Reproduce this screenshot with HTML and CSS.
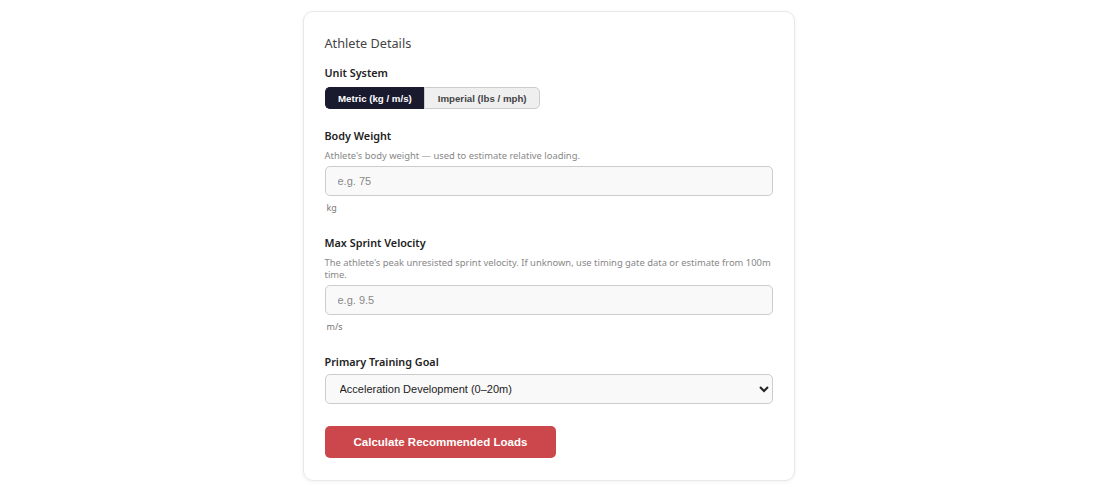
FILE: index.html
```html
<!DOCTYPE html>
<html lang="en">
<head>
<meta charset="utf-8">
<title>Athlete Details</title>
<link rel="stylesheet" href="styles.css">
</head>
<body>
<main class="card">
  <h2 class="card-title">Athlete Details</h2>

  <div class="field">
    <label class="label">Unit System</label>
    <div class="toggle">
      <button class="seg seg-active" type="button">Metric (kg / m/s)</button>
      <button class="seg" type="button">Imperial (lbs / mph)</button>
    </div>
  </div>

  <div class="field">
    <label class="label" for="bw">Body Weight</label>
    <p class="hint">Athlete's body weight — used to estimate relative loading.</p>
    <input id="bw" class="input" type="text" placeholder="e.g. 75">
    <span class="unit">kg</span>
  </div>

  <div class="field">
    <label class="label" for="vel">Max Sprint Velocity</label>
    <p class="hint">The athlete's peak unresisted sprint velocity. If unknown, use timing gate data or estimate from 100m time.</p>
    <input id="vel" class="input" type="text" placeholder="e.g. 9.5">
    <span class="unit">m/s</span>
  </div>

  <div class="field">
    <label class="label" for="goal">Primary Training Goal</label>
    <select id="goal" class="select">
      <option>Acceleration Development (0–20m)</option>
    </select>
  </div>

  <button class="submit" type="button">Calculate Recommended Loads</button>
</main>
</body>
</html>
```

FILE: styles.css
```css
* { box-sizing: border-box; }
html, body { margin: 0; padding: 0; background: #fff; }
body {
  font-family: "Noto Sans", "Open Sans", sans-serif;
  color: #222;
  padding: 11px 3px 14px 0;
}
.card {
  width: 492px;
  margin: 0 auto;
  background: #fff;
  border: 1px solid #e8e8e8;
  border-radius: 10px;
  box-shadow: 0 1px 4px rgba(0,0,0,0.06);
  padding: 21px 21px 22px 21px;
  display: flex;
  flex-direction: column;
}
.card-title {
  margin: 0 0 12px;
  font-size: 12.7px;
  font-weight: 400;
  color: #444;
  line-height: 20px;
}
.field { display: flex; flex-direction: column; margin-bottom: 19px; }
.label {
  font-size: 10.8px;
  font-weight: 600;
  color: #222;
  line-height: 16px;
  margin-bottom: 6px;
}
.hint {
  margin: -0.5px 0 4.5px;
  font-size: 9.4px;
  line-height: 12px;
  color: #888;
}
.toggle { display: flex; }
.seg {
  font-family: "Liberation Sans", Arial, sans-serif;
  font-size: 9.7px;
  font-weight: 700;
  height: 22px;
  padding: 0 12px;
  white-space: nowrap;
  border: 1px solid #ccc;
  background: #efefef;
  color: #444;
  cursor: pointer;
}
.seg:first-child { border-radius: 5px 0 0 5px; border-right: none; padding: 0 12.5px; }
.seg:last-child { border-radius: 0 5px 5px 0; padding: 0 12.5px; }
.seg-active { background: #1a1a2e; border-color: #1a1a2e; color: #fff; }
.input, .select {
  width: 100%;
  height: 30px;
  border: 1px solid #ccc;
  border-radius: 5px;
  background: #f9f9f9;
  font-family: "Liberation Sans", Arial, sans-serif;
  font-size: 11px;
  padding: 0 12px;
  color: #222;
}
.input::placeholder { color: #888; }
.unit {
  font-size: 9px;
  color: #777;
  margin: 6px 0 2px 2px;
  line-height: 12px;
}
.select { padding: 0 8px 0 10px; margin-top: -2px; }
.submit {
  align-self: flex-start;
  margin-top: 3px;
  height: 32px;
  padding: 0 29px;
  border: none;
  border-radius: 5px;
  background: #cc474b;
  color: #fff;
  font-family: "Liberation Sans", Arial, sans-serif;
  font-size: 11.5px;
  font-weight: 700;
  cursor: pointer;
}
```
